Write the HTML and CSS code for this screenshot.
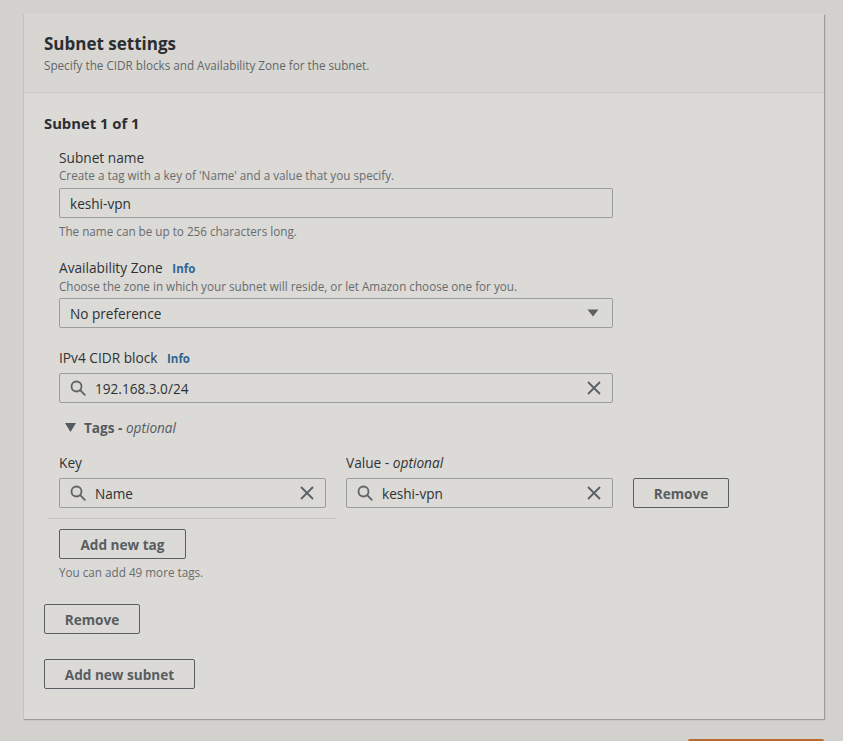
FILE: index.html
```html
<!DOCTYPE html>
<html>
<head>
<meta charset="utf-8">
<link rel="stylesheet" href="styles.css">
</head>
<body>
<div class="page">
  <section class="panel">
    <header class="panel-head">
      <h2>Subnet settings</h2>
      <p class="sub">Specify the CIDR blocks and Availability Zone for the subnet.</p>
    </header>
    <div class="panel-body">
      <h3>Subnet 1 of 1</h3>
      <div class="fields">
        <div class="field">
          <div class="label">Subnet name</div>
          <div class="desc">Create a tag with a key of 'Name' and a value that you specify.</div>
          <div class="input wide"><span class="val">keshi-vpn</span></div>
          <div class="desc hint">The name can be up to 256 characters long.</div>
        </div>
        <div class="field az">
          <div class="label">Availability Zone <span class="info">Info</span></div>
          <div class="desc">Choose the zone in which your subnet will reside, or let Amazon choose one for you.</div>
          <div class="input wide select"><span class="val">No preference</span>
            <svg class="caret" width="12" height="8" viewBox="0 0 12 8"><path d="M0.5 0.5h11L6 7.5z" fill="#5b6065"/></svg>
          </div>
        </div>
        <div class="field cidr">
          <div class="label">IPv4 CIDR block <span class="info">Info</span></div>
          <div class="input wide search">
            <svg class="mag" width="16" height="16" viewBox="0 0 16 16"><circle cx="6.5" cy="6.5" r="5" fill="none" stroke="#5f6467" stroke-width="1.8"/><path d="M10.2 10.2l4.6 4.6" stroke="#5f6467" stroke-width="1.8" stroke-linecap="round"/></svg>
            <span class="val">192.168.3.0/24</span>
            <svg class="clear" width="14" height="14" viewBox="0 0 14 14"><path d="M1 1l12 12M13 1L1 13" stroke="#5b6065" stroke-width="1.8"/></svg>
          </div>
        </div>
        <div class="tags-toggle">
          <svg width="11" height="9" viewBox="0 0 11 9"><path d="M0 0h11L5.5 9z" fill="#545b60"/></svg>
          <span class="tags-title">Tags - <i>optional</i></span>
        </div>
        <div class="tag-row">
          <div class="tag-col">
            <div class="label">Key</div>
            <div class="input search">
              <svg class="mag" width="16" height="16" viewBox="0 0 16 16"><circle cx="6.5" cy="6.5" r="5" fill="none" stroke="#5f6467" stroke-width="1.8"/><path d="M10.2 10.2l4.6 4.6" stroke="#5f6467" stroke-width="1.8" stroke-linecap="round"/></svg>
              <span class="val">Name</span>
              <svg class="clear" width="14" height="14" viewBox="0 0 14 14"><path d="M1 1l12 12M13 1L1 13" stroke="#5b6065" stroke-width="1.8"/></svg>
            </div>
          </div>
          <div class="tag-col">
            <div class="label">Value - <i>optional</i></div>
            <div class="input search">
              <svg class="mag" width="16" height="16" viewBox="0 0 16 16"><circle cx="6.5" cy="6.5" r="5" fill="none" stroke="#5f6467" stroke-width="1.8"/><path d="M10.2 10.2l4.6 4.6" stroke="#5f6467" stroke-width="1.8" stroke-linecap="round"/></svg>
              <span class="val">keshi-vpn</span>
              <svg class="clear" width="14" height="14" viewBox="0 0 14 14"><path d="M1 1l12 12M13 1L1 13" stroke="#5b6065" stroke-width="1.8"/></svg>
            </div>
          </div>
          <button class="btn tag-remove">Remove</button>
        </div>
        <div class="tag-divider"></div>
        <button class="btn add-tag">Add new tag</button>
        <div class="desc more">You can add 49 more tags.</div>
      </div>
      <button class="btn remove-subnet">Remove</button>
      <button class="btn add-subnet">Add new subnet</button>
    </div>
  </section>
  <div class="footer-bar"><span class="orange"></span></div>
</div>
</body>
</html>
```
FILE: styles.css
```css
* { box-sizing: border-box; }
html, body { margin: 0; padding: 0; }
body {
  background: #d2d1cd;
  font-family: "Open Sans", "Noto Sans", sans-serif;
  color: #2e3134;
  width: 843px;
  height: 741px;
  overflow: hidden;
}
.page { padding: 14px 19px 0 23px; }
.panel {
  width: 801px;
  height: 705px;
  background: #dbdad6;
  border-left: 1px solid #c3c2be;
  box-shadow: 1px 1px 1px rgba(0,0,0,0.25);
}
.panel-head {
  background: #d7d6d2;
  height: 79px;
  border-bottom: 1px solid #c8c7c3;
  padding: 19px 20px 0 20px;
}
h2 {
  margin: 0;
  font-size: 17px;
  font-weight: 700;
  line-height: 22px;
  color: #2b2e31;
}
.sub {
  margin: 2px 0 0;
  font-size: 11.7px;
  line-height: 16px;
  color: #62676a;
}
.panel-body { padding: 20px 20px 0 20px; }
h3 {
  margin: 0;
  font-size: 14.8px;
  font-weight: 700;
  line-height: 20px;
  color: #2b2e31;
}
.fields { padding: 15px 0 0 15px; }
.field { margin-bottom: 19px; }
.field.az { margin-bottom: 20px; }
.field.cidr { margin-bottom: 14px; }
.label {
  font-size: 13.7px;
  line-height: 19px;
  color: #303336;
}
.info {
  font-size: 11.5px;
  font-weight: 700;
  color: #2f6591;
  margin-left: 6px;
}
.desc {
  font-size: 11.7px;
  line-height: 16px;
  color: #686c6f;
}
.hint { margin-top: 5px; }
.input {
  height: 30px;
  border: 1px solid #9a9d9f;
  border-radius: 2px;
  display: flex;
  align-items: center;
  padding: 0 10px;
  font-size: 13.6px;
  color: #2e3134;
  margin-top: 5px;
}
.az .input { margin-top: 4px; }
.input.wide { width: 554px; }
.select { justify-content: space-between; padding-right: 13px; }
.search .mag { margin-right: 9px; flex: none; }
.search .val { flex: 1; }
.search .clear { flex: none; margin-right: 1px; }
.tags-toggle {
  display: flex;
  align-items: center;
  gap: 8px;
  padding-left: 6px;
  height: 20px;
}
.tags-title {
  font-size: 13.6px;
  font-weight: 700;
  color: #555a5e;
}
.tags-title i { font-weight: 400; }
.tag-row {
  display: flex;
  align-items: flex-end;
  margin-top: 16px;
}
.tag-col { width: 267px; margin-right: 20px; }
.tag-col .input { margin-top: 6px; }
.tag-col i { color: #303336; }
.btn {
  display: block;
  background: transparent;
  border: 1px solid #595e62;
  border-radius: 2px;
  font-family: "Open Sans", "Noto Sans", sans-serif;
  font-size: 13.6px;
  font-weight: 700;
  color: #585d61;
  height: 30px;
  padding: 0;
}
.tag-remove { width: 96px; }
.tag-divider {
  height: 1px;
  background: #c6c5c1;
  width: 288px;
  margin: 10px 0 0 -11px;
}
.add-tag { width: 127px; margin-top: 10px; }
.more { margin-top: 5px; }
.remove-subnet { width: 96px; margin-top: 24px; }
.add-subnet { width: 151px; margin-top: 25px; }
.footer-bar { display: flex; justify-content: flex-end; padding-top: 20px; }
.orange {
  display: block;
  width: 136px;
  height: 4px;
  background: #b8692d;
  border-radius: 2px 2px 0 0;
}
```
